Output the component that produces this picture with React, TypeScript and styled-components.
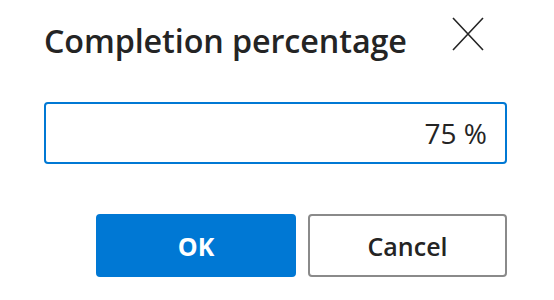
import React from "react";
import styled, { createGlobalStyle } from "styled-components";

const GlobalStyle = createGlobalStyle`
  body {
    margin: 0;
    background: #ffffff;
    font-family: "Open Sans", "Noto Sans", sans-serif;
  }
`;

export default function App() {
  return (
    <>
      <GlobalStyle />
      <Dialog>
        <Header>
          <Title>Completion percentage</Title>
          <CloseButton aria-label="Close">
            <svg width="32" height="34" viewBox="0 0 32 34">
              <path
                d="M1 1 L31 33 M31 1 L1 33"
                stroke="#242424"
                strokeWidth="1.6"
                fill="none"
              />
            </svg>
          </CloseButton>
        </Header>
        <Field>
          <Value>75 %</Value>
        </Field>
        <Actions>
          <Button primary>OK</Button>
          <Button>Cancel</Button>
        </Actions>
      </Dialog>
    </>
  );
}

const Dialog = styled.div`
  width: 554px;
  height: 300px;
  box-sizing: border-box;
  padding: 17px 47px 0 44px;
  display: flex;
  flex-direction: column;
`;

const Header = styled.div`
  display: flex;
  justify-content: space-between;
  align-items: flex-start;
  height: 85px;
`;

const Title = styled.h1`
  margin: 0;
  padding-top: 1px;
  font-size: 32.3px;
  font-weight: 600;
  color: #242424;
  line-height: 44px;
  letter-spacing: -0.1px;
`;

const CloseButton = styled.button`
  border: none;
  background: none;
  padding: 0;
  margin-right: 23px;
  width: 32px;
  height: 34px;
  cursor: pointer;
`;

const Field = styled.div`
  height: 62px;
  box-sizing: border-box;
  border: 2px solid #0078d4;
  border-radius: 4px;
  display: flex;
  align-items: center;
  justify-content: flex-end;
  padding-right: 18px;
`;

const Value = styled.span`
  font-size: 28px;
  color: #242424;
`;

const Actions = styled.div`
  margin-top: 50px;
  display: flex;
  justify-content: flex-end;
  gap: 12px;
`;

const Button = styled.button<{ primary?: boolean }>`
  width: ${({ primary }) => (primary ? "200px" : "199px")};
  height: 63px;
  box-sizing: border-box;
  border-radius: 4px;
  font-family: "Open Sans", "Noto Sans", sans-serif;
  font-size: 25px;
  font-weight: ${({ primary }) => (primary ? 700 : 600)};
  color: ${({ primary }) => (primary ? "#ffffff" : "#242424")};
  background: ${({ primary }) => (primary ? "#0078d4" : "#ffffff")};
  border: 2px solid ${({ primary }) => (primary ? "#0078d4" : "#8a8a8a")};
  cursor: pointer;
`;
